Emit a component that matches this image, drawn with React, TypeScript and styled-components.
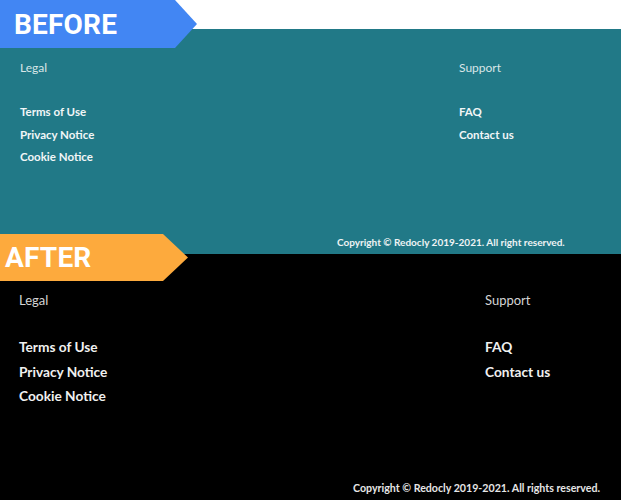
import React from "react";
import styled, { createGlobalStyle } from "styled-components";

const GlobalStyle = createGlobalStyle`
  html, body {
    margin: 0;
    padding: 0;
    background: #ffffff;
  }
`;

type Variant = "before" | "after";

const Page = styled.div`
  width: 621px;
  height: 500px;
  overflow: hidden;
  display: flex;
  flex-direction: column;
`;

const Section = styled.section<{ $variant: Variant }>`
  position: relative;
  display: flex;
  flex-direction: column;
  padding-top: ${({ $variant }) => ($variant === "before" ? "29px" : "0")};
  background: #ffffff;
`;

const Banner = styled.div<{ $variant: Variant }>`
  position: absolute;
  left: 0;
  top: ${({ $variant }) => ($variant === "before" ? "0" : "-20px")};
  z-index: 2;
  height: ${({ $variant }) => ($variant === "before" ? "48px" : "47px")};
  width: ${({ $variant }) => ($variant === "before" ? "197px" : "188px")};
  display: flex;
  align-items: center;
  box-sizing: border-box;
  padding-left: ${({ $variant }) => ($variant === "before" ? "14px" : "5px")};
  background: ${({ $variant }) => ($variant === "before" ? "#4286f3" : "#fdaa3d")};
  clip-path: ${({ $variant }) =>
    $variant === "before"
      ? "polygon(0 0, 175px 0, 100% 50%, 175px 100%, 0 100%)"
      : "polygon(0 0, 163px 0, 100% 50%, 163px 100%, 0 100%)"};
  color: #ffffff;
  font-family: Roboto, "Liberation Sans", sans-serif;
  font-weight: 700;
  font-size: 28px;
  letter-spacing: 0.2px;
`;

const Footer = styled.footer<{ $variant: Variant }>`
  box-sizing: border-box;
  display: flex;
  flex-direction: column;
  height: ${({ $variant }) => ($variant === "before" ? "225px" : "246px")};
  padding: ${({ $variant }) =>
    $variant === "before" ? "31px 0 5px 20px" : "37px 0 5px 19px"};
  background: ${({ $variant }) => ($variant === "before" ? "#217987" : "#000000")};
  font-family: Lato, "Open Sans", sans-serif;
`;

const Columns = styled.div<{ $variant: Variant }>`
  display: grid;
  grid-template-columns: ${({ $variant }) =>
    $variant === "before" ? "439px 1fr" : "466px 1fr"};
`;

const Column = styled.div<{ $variant: Variant }>`
  display: flex;
  flex-direction: column;
  gap: ${({ $variant }) => ($variant === "before" ? "25px" : "26px")};
`;

const Title = styled.div<{ $variant: Variant }>`
  font-size: ${({ $variant }) => ($variant === "before" ? "12px" : "13px")};
  line-height: ${({ $variant }) => ($variant === "before" ? "16px" : "18px")};
  color: ${({ $variant }) => ($variant === "before" ? "#d9e6e8" : "#d4d4d4")};
`;

const Links = styled.ul`
  list-style: none;
  margin: 0;
  padding: 0;
`;

const Link = styled.li<{ $variant: Variant }>`
  font-weight: 700;
  font-size: ${({ $variant }) => ($variant === "before" ? "11.5px" : "13.7px")};
  line-height: ${({ $variant }) => ($variant === "before" ? "22.5px" : "24.5px")};
  color: ${({ $variant }) => ($variant === "before" ? "#f2f6f7" : "#f0f0f0")};
`;

const Copyright = styled.div<{ $variant: Variant }>`
  margin-top: auto;
  font-weight: 700;
  font-size: ${({ $variant }) => ($variant === "before" ? "10px" : "10.65px")};
  line-height: 14px;
  color: ${({ $variant }) => ($variant === "before" ? "#eef3f4" : "#e6e6e6")};
  padding-left: ${({ $variant }) => ($variant === "before" ? "317px" : "334px")};
  white-space: nowrap;
`;

const columns = [
  { title: "Legal", links: ["Terms of Use", "Privacy Notice", "Cookie Notice"] },
  { title: "Support", links: ["FAQ", "Contact us"] }
];

const FooterBlock = ({ variant, copyright }: { variant: Variant; copyright: string }) => (
  <Footer $variant={variant}>
    <Columns $variant={variant}>
      {columns.map(col => (
        <Column key={col.title} $variant={variant}>
          <Title $variant={variant}>{col.title}</Title>
          <Links>
            {col.links.map(link => (
              <Link key={link} $variant={variant}>
                {link}
              </Link>
            ))}
          </Links>
        </Column>
      ))}
    </Columns>
    <Copyright $variant={variant}>{copyright}</Copyright>
  </Footer>
);

const App = () => {
  return (
    <Page>
      <GlobalStyle />
      <Section $variant="before">
        <Banner $variant="before">BEFORE</Banner>
        <FooterBlock
          variant="before"
          copyright="Copyright © Redocly 2019-2021. All right reserved."
        />
      </Section>
      <Section $variant="after">
        <Banner $variant="after">AFTER</Banner>
        <FooterBlock
          variant="after"
          copyright="Copyright © Redocly 2019-2021. All rights reserved."
        />
      </Section>
    </Page>
  );
};

export default App;
